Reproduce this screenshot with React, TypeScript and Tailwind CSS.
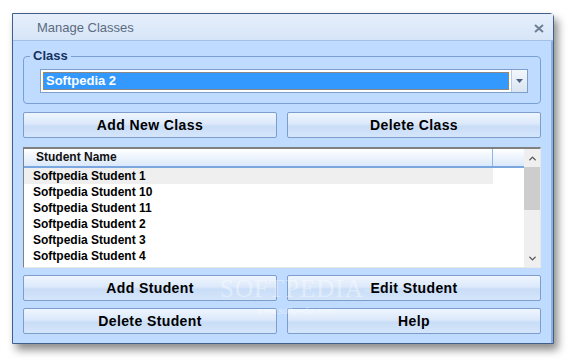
import { ChevronUp, ChevronDown } from 'lucide-react'

const STUDENTS = [
  'Softpedia Student 1',
  'Softpedia Student 10',
  'Softpedia Student 11',
  'Softpedia Student 2',
  'Softpedia Student 3',
  'Softpedia Student 4',
]

function Btn({ label }: { label: string }) {
  return (
    <button className="h-[26px] flex-1 rounded-[2px] border border-[#7d9dcd] bg-[linear-gradient(#eef5fe_0%,#dce9fb_45%,#c9ddf7_55%,#d5e6fb_100%)] text-[14px] font-bold tracking-[0.4px] text-black [font-family:'Liberation_Sans',Arial,sans-serif]">
      {label}
    </button>
  )
}

export default function App() {
  return (
    <div className="relative h-[364px] w-[575px] overflow-hidden bg-white pl-[12px] pt-[13px] [font-family:'Liberation_Sans',Arial,sans-serif]">
      {/* window */}
      <div className="flex h-[331px] w-[542px] flex-col rounded-tr-[4px] border border-[#3f5f8e] bg-[#bfdbff] shadow-[4px_6px_8px_rgba(0,0,0,0.45)]">
        {/* title bar */}
        <div className="flex h-[27px] items-center justify-between border-b border-[#a3c0e6] bg-[linear-gradient(#e6effb,#d6e5f8)] pl-[24px] pr-[9px] pt-[2px]">
          <span className="text-[13px] text-[#5b6b80]">Manage Classes</span>
          <svg width="10" height="9" viewBox="0 0 10 9">
            <path d="M1 1 L9 8 M9 1 L1 8" stroke="#6d7e95" strokeWidth="2" />
          </svg>
        </div>

        {/* body */}
        <div className="flex flex-1 flex-col border-r-2 border-r-[#8fb0da] px-[10px] pt-[15px]">
          {/* group box */}
          <div className="relative h-[48px] rounded-[4px] border border-[#7a9fd2] pl-[16px] pt-[12px]">
            <span className="absolute -top-[8px] left-[6px] bg-[#bfdbff] px-[3px] text-[13px] font-bold leading-[14px] text-[#15325f]">Class</span>
            <div className="flex h-[24px] w-[488px] border border-[#7f9fcb] bg-white">
              <div className="m-[2px] flex flex-1 items-center border border-dotted border-[#e07a10] bg-[#3399ff] pl-[2px]">
                <span className="text-[13px] font-bold text-white">Softpedia 2</span>
              </div>
              <div className="flex w-[16px] items-center justify-center border-l border-[#b5cbe6] bg-[linear-gradient(#f3f7fc,#d9e5f2)]">
                <svg width="7" height="4" viewBox="0 0 7 4"><path d="M0 0 H7 L3.5 4 Z" fill="#4d6185" /></svg>
              </div>
            </div>
          </div>

          <div className="mt-[8px] flex gap-[10px]">
            <Btn label="Add New Class" />
            <Btn label="Delete Class" />
          </div>

          {/* list */}
          <div className="mt-[9px] flex h-[121px] border border-t-2 border-[#808080] border-b-[#e8e8e8] border-r-[#e8e8e8] bg-white">
            <div className="flex flex-1 flex-col">
              <div className="flex h-[19px] border-b-2 border-[#7aa7df] bg-[linear-gradient(#ffffff,#dbe9fb)]">
                <div className="w-[469px] border-r border-[#8db6ea] pl-[12px] text-[12px] font-bold leading-[17px] text-[#111]">Student Name</div>
              </div>
              {STUDENTS.map((s, i) => (
                <div key={s} className={`h-[16px] w-[469px] pl-[9px] text-[12px] font-bold leading-[16px] text-black ${i === 0 ? 'bg-[#efefef]' : ''}`}>
                  {s}
                </div>
              ))}
            </div>
            <div className="flex w-[16px] flex-col bg-[#efefef]">
              <div className="flex h-[18px] items-center justify-center">
                <ChevronUp size={11} strokeWidth={3} color="#555" />
              </div>
              <div className="h-[43px] bg-[#cdcdcd]" />
              <div className="flex-1" />
              <div className="flex h-[17px] items-center justify-center">
                <ChevronDown size={11} strokeWidth={3} color="#555" />
              </div>
            </div>
          </div>

          <div className="mt-[7px] flex gap-[10px]">
            <Btn label="Add Student" />
            <Btn label="Edit Student" />
          </div>
          <div className="mt-[7px] flex gap-[10px]">
            <Btn label="Delete Student" />
            <Btn label="Help" />
          </div>
        </div>
      </div>

      {/* watermark */}
      <div className="pointer-events-none absolute left-[220px] top-[276px] flex flex-col items-center">
        <span className="text-[25px] leading-[26px] tracking-[1px] text-white/40 [font-family:'Liberation_Serif',serif]">SOFTPEDIA<sup className="text-[7px]">™</sup></span>
        <span className="mt-[4px] text-[9px] leading-[11px] text-white/50">www.softpedia.com</span>
      </div>
    </div>
  )
}
